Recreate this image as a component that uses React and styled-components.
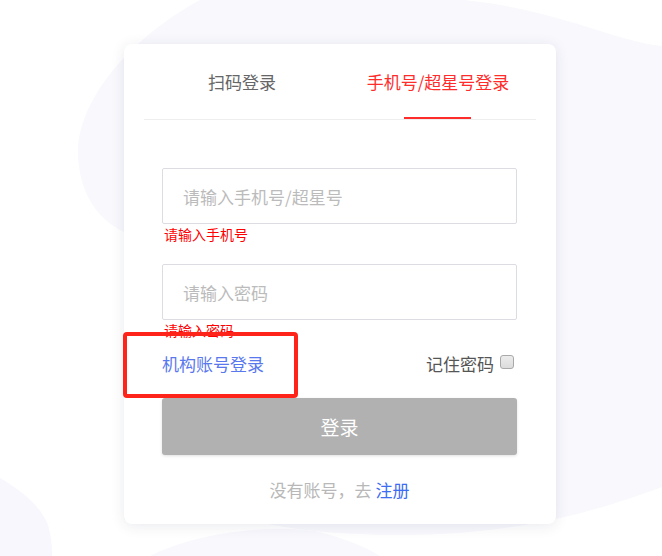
import React from "react";
import styled, { createGlobalStyle } from "styled-components";

const GlobalStyle = createGlobalStyle`
  html, body {
    margin: 0;
    padding: 0;
    background: #fff;
  }
  body {
    font-family: "Microsoft YaHei", "Noto Sans CJK SC", "Noto Sans", sans-serif;
  }
`;

const Backdrop = () => (
  <BackdropSvg viewBox="0 0 662 556" preserveAspectRatio="none">
    <path
      d="M200 0 L464 0 C560 10 610 40 662 46 L662 487 C600 510 520 535 400 535 C330 535 280 528 250 520 L124 520 L124 232 C95 218 78 190 78 150 C80 95 135 35 200 0 Z"
      fill="#f8f8fd"
    />
    <path d="M0 478 C20 490 40 505 48 525 C52 540 52 550 52 556 L0 556 Z" fill="#f7f7fd" />
    <path d="M150 556 C190 536 255 524 315 531 C345 538 368 548 380 556 Z" fill="#f8f8fd" />
  </BackdropSvg>
);

const App = () => {
  return (
    <Page>
      <GlobalStyle />
      <Backdrop />
      <Card>
        <Tabs>
          <Tab>扫码登录</Tab>
          <Tab $active>手机号/超星号登录</Tab>
        </Tabs>
        <Form>
          <Field>
            <Input placeholder="请输入手机号/超星号" />
            <ErrorText>请输入手机号</ErrorText>
          </Field>
          <Field>
            <Input type="password" placeholder="请输入密码" />
            <ErrorText>请输入密码</ErrorText>
          </Field>
          <OptionRow>
            <OrgLink>机构账号登录</OrgLink>
            <Remember>
              记住密码
              <Check type="checkbox" />
            </Remember>
          </OptionRow>
          <LoginButton>登录</LoginButton>
          <Footer>
            没有账号，去 <RegisterLink>注册</RegisterLink>
          </Footer>
        </Form>
        <Highlight />
      </Card>
    </Page>
  );
};

const Page = styled.div`
  position: relative;
  width: 662px;
  height: 556px;
  overflow: hidden;
  padding: 44px 0 0 124px;
  box-sizing: border-box;
`;

const BackdropSvg = styled.svg`
  position: absolute;
  left: 0;
  top: 0;
  width: 662px;
  height: 556px;
`;

const Card = styled.div`
  position: relative;
  width: 432px;
  box-sizing: border-box;
  padding: 20px 20px 22px;
  background: #fff;
  border-radius: 8px;
  box-shadow: 0 2px 14px rgba(40, 50, 90, 0.1);
`;

const Tabs = styled.div`
  display: grid;
  grid-template-columns: 1fr 1fr;
  border-bottom: 1px solid #eeeeee;
`;

const Tab = styled.div`
  position: relative;
  height: 55px;
  line-height: 36px;
  text-align: center;
  font-size: 17px;
  color: ${(p) => (p.$active ? "#ff2c2c" : "#666666")};

  &::after {
    content: "";
    display: ${(p) => (p.$active ? "block" : "none")};
    position: absolute;
    left: 50%;
    bottom: 0;
    width: 67px;
    height: 2px;
    margin-left: -34px;
    background: #ff2c2c;
  }
`;

const Form = styled.div`
  padding: 48px 19px 0 18px;
  display: flex;
  flex-direction: column;
`;

const Field = styled.div`
  display: flex;
  flex-direction: column;
  margin-bottom: 20px;

  &:nth-child(2) {
    margin-bottom: 0;
  }
`;

const Input = styled.input`
  height: 56px;
  box-sizing: border-box;
  border: 1px solid #dcdde3;
  border-radius: 2px;
  padding: 0 20px;
  font-family: inherit;
  font-size: 17px;
  color: #333;
  outline: none;

  &::placeholder {
    color: #bbbbbb;
  }
`;

const ErrorText = styled.div`
  height: 20px;
  line-height: 20px;
  padding-left: 2px;
  font-size: 14px;
  color: #ff0000;
`;

const OptionRow = styled.div`
  height: 46px;
  display: flex;
  align-items: center;
  justify-content: space-between;
`;

const OrgLink = styled.span`
  font-size: 17px;
  color: #5a78ee;
`;

const Remember = styled.label`
  display: flex;
  align-items: center;
  font-size: 17px;
  color: #555555;
`;

const Check = styled.input`
  appearance: none;
  width: 14px;
  height: 14px;
  margin: 0 3px 2px 6px;
  border: 1px solid #a9a9a9;
  border-radius: 3px;
  background: linear-gradient(#ececec, #dcdcdc);
  box-sizing: border-box;
`;

const LoginButton = styled.button`
  margin-top: 12px;
  height: 57px;
  border: none;
  border-radius: 3px;
  background: #b1b1b1;
  color: #fff;
  font-family: inherit;
  font-size: 19px;
  box-shadow: 0 1px 3px rgba(0, 0, 0, 0.12);
`;

const Footer = styled.div`
  margin-top: 23px;
  line-height: 24px;
  text-align: center;
  font-size: 17px;
  color: #b8b8b8;
`;

const RegisterLink = styled.span`
  color: #3d6cf2;
`;

const Highlight = styled.div`
  position: absolute;
  left: -1px;
  top: 288px;
  width: 175px;
  height: 66px;
  box-sizing: border-box;
  border: 4px solid #ff2419;
  border-radius: 4px;
`;

export default App;
